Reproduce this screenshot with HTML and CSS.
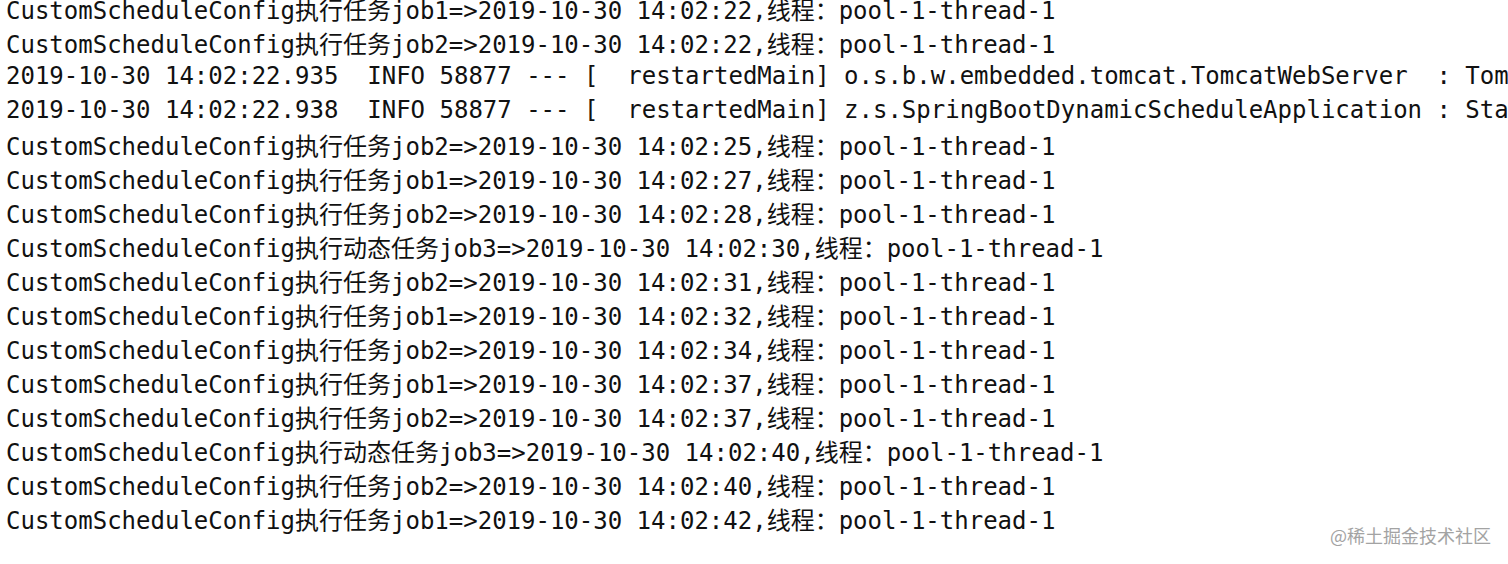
FILE: index.html
```html
<!DOCTYPE html>
<html lang="zh-CN">
<head>
<meta charset="utf-8">
<title>Console</title>
<link rel="stylesheet" href="styles.css">
</head>
<body>
<main class="console">
<div class="line">CustomScheduleConfig执行任务job1=&gt;2019-10-30 14:02:22,线程：pool-1-thread-1</div>
<div class="line">CustomScheduleConfig执行任务job2=&gt;2019-10-30 14:02:22,线程：pool-1-thread-1</div>
<div class="boot-log">
<div class="line">2019-10-30 14:02:22.935  INFO 58877 --- [  restartedMain] o.s.b.w.embedded.tomcat.TomcatWebServer  : Tomcat started on port(s): 8080 (http) with context path ''</div>
<div class="line">2019-10-30 14:02:22.938  INFO 58877 --- [  restartedMain] z.s.SpringBootDynamicScheduleApplication : Started SpringBootDynamicScheduleApplication in 3.2 seconds</div>
</div>
<div class="line">CustomScheduleConfig执行任务job2=&gt;2019-10-30 14:02:25,线程：pool-1-thread-1</div>
<div class="line">CustomScheduleConfig执行任务job1=&gt;2019-10-30 14:02:27,线程：pool-1-thread-1</div>
<div class="line">CustomScheduleConfig执行任务job2=&gt;2019-10-30 14:02:28,线程：pool-1-thread-1</div>
<div class="line">CustomScheduleConfig执行动态任务job3=&gt;2019-10-30 14:02:30,线程：pool-1-thread-1</div>
<div class="line">CustomScheduleConfig执行任务job2=&gt;2019-10-30 14:02:31,线程：pool-1-thread-1</div>
<div class="line">CustomScheduleConfig执行任务job1=&gt;2019-10-30 14:02:32,线程：pool-1-thread-1</div>
<div class="line">CustomScheduleConfig执行任务job2=&gt;2019-10-30 14:02:34,线程：pool-1-thread-1</div>
<div class="line">CustomScheduleConfig执行任务job1=&gt;2019-10-30 14:02:37,线程：pool-1-thread-1</div>
<div class="line">CustomScheduleConfig执行任务job2=&gt;2019-10-30 14:02:37,线程：pool-1-thread-1</div>
<div class="line">CustomScheduleConfig执行动态任务job3=&gt;2019-10-30 14:02:40,线程：pool-1-thread-1</div>
<div class="line">CustomScheduleConfig执行任务job2=&gt;2019-10-30 14:02:40,线程：pool-1-thread-1</div>
<div class="line">CustomScheduleConfig执行任务job1=&gt;2019-10-30 14:02:42,线程：pool-1-thread-1</div>
</main>
<div class="watermark">@稀土掘金技术社区</div>
</body>
</html>
```

FILE: styles.css
```css
html, body {
  margin: 0;
  padding: 0;
  background: #ffffff;
  width: 1508px;
  height: 564px;
  overflow: hidden;
}

body {
  position: relative;
}

.console {
  margin-top: -6px;
  padding-left: 6px;
  font-family: "DejaVu Sans Mono", "Noto Sans CJK SC", monospace;
  font-size: 24px;
  line-height: 34px;
  color: #111111;
}

.boot-log {
  margin-top: -3px;
  margin-bottom: 3px;
}

.line {
  white-space: pre;
  overflow: hidden;
}

.watermark {
  position: absolute;
  right: 17px;
  bottom: 19px;
  font-family: "Noto Sans CJK SC", "Liberation Sans", sans-serif;
  font-size: 18px;
  line-height: 20px;
  color: #a3a3a3;
}
```
